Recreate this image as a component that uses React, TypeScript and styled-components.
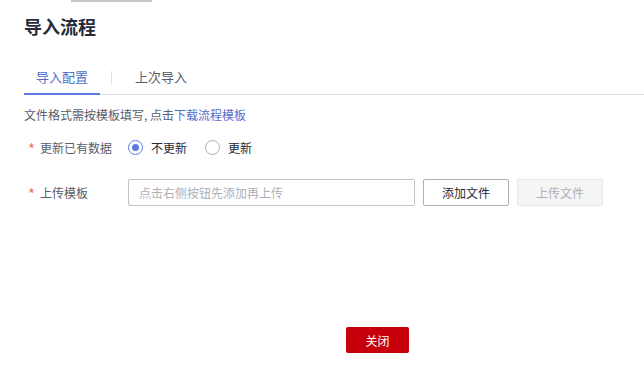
import React from "react";
import styled, { createGlobalStyle } from "styled-components";

const Global = createGlobalStyle`
  html, body { margin: 0; padding: 0; background: #fff; overflow: hidden; }
  body { font-family: "Noto Sans CJK SC", "Noto Sans", sans-serif; color: #575d6c; }
  * { box-sizing: border-box; }
`;

const Viewport = styled.div`
  width: 100vw;
  overflow: hidden;
`;

const Page = styled.div`
  width: 755px;
  padding: 0 24px;
  display: flex;
  flex-direction: column;
`;

const TopStrip = styled.div`
  width: 81px;
  height: 2px;
  margin-left: 47px;
  background: #c8c8c8;
`;

const Title = styled.h1`
  margin: 12px 0 0;
  font-size: 18px;
  line-height: 24px;
  font-weight: 700;
  color: #252b3a;
`;

const TabBar = styled.div`
  margin-top: 29px;
  display: flex;
  align-items: center;
  border-bottom: 1px solid #dfe1e6;
`;

const Tab = styled.div<{ $active?: boolean }>`
  padding: 0 12px 6px;
  font-size: 13px;
  line-height: 20px;
  color: ${(p) => (p.$active ? "#526ecc" : "#575d6c")};
  border-bottom: 2px solid ${(p) => (p.$active ? "#5e7ce0" : "transparent")};
  margin-bottom: -1px;
`;

const TabDivider = styled.div`
  width: 1px;
  height: 14px;
  margin: 0 11px 6px;
  background: #dfe1e6;
`;

const Hint = styled.p`
  margin: 11px 0 0;
  font-size: 12px;
  line-height: 18px;
  color: #575d6c;
`;

const Link = styled.a`
  color: #526ecc;
  text-decoration: none;
`;

const FormRow = styled.div<{ $gap: number }>`
  margin-top: ${(p) => p.$gap}px;
  display: flex;
  align-items: center;
  min-height: 28px;
`;

const Label = styled.div`
  width: 104px;
  padding-left: 4px;
  display: flex;
  align-items: center;
  gap: 4px;
  font-size: 12px;
  color: #575d6c;
`;

const Star = styled.span`
  color: #f66f6a;
  font-size: 15px;
  line-height: 12px;
  width: 8px;
  padding-top: 3px;
`;

const RadioGroup = styled.div`
  display: flex;
  align-items: center;
  gap: 18px;
`;

const RadioItem = styled.label`
  display: flex;
  align-items: center;
  gap: 8px;
  font-size: 12px;
  color: #252b3a;
`;

const RadioCircle = styled.span<{ $checked?: boolean }>`
  width: 15px;
  height: 15px;
  border-radius: 50%;
  border: 1px solid ${(p) => (p.$checked ? "#5e7ce0" : "#adb0b8")};
  display: flex;
  align-items: center;
  justify-content: center;
  &::after {
    content: "";
    width: 7px;
    height: 7px;
    border-radius: 50%;
    background: ${(p) => (p.$checked ? "#5e7ce0" : "transparent")};
  }
`;

const Input = styled.input`
  width: 287px;
  height: 27px;
  border: 1px solid #c2c4ca;
  border-radius: 2px;
  padding: 0 10px;
  font-family: inherit;
  font-size: 12px;
  color: #252b3a;
  outline: none;
  &::placeholder { color: #adb0b8; }
`;

const Button = styled.button<{ $disabled?: boolean }>`
  width: 86px;
  height: 27px;
  margin-left: 8px;
  border-radius: 2px;
  font-family: inherit;
  font-size: 12px;
  border: 1px solid ${(p) => (p.$disabled ? "#e6e7ea" : "#adb0b8")};
  background: ${(p) => (p.$disabled ? "#f5f5f6" : "#fff")};
  color: ${(p) => (p.$disabled ? "#adb0b8" : "#252b3a")};
`;

const Footer = styled.div`
  margin-top: 121px;
  display: flex;
  justify-content: center;
`;

const CloseButton = styled.button`
  width: 63px;
  height: 26px;
  border: none;
  border-radius: 2px;
  background: #c7000b;
  color: #fff;
  font-family: inherit;
  font-size: 12px;
`;

export default function App() {
  return (
    <>
      <Global />
      <Viewport>
        <Page>
          <TopStrip />
          <Title>导入流程</Title>
          <TabBar>
            <Tab $active>导入配置</Tab>
            <TabDivider />
            <Tab>上次导入</Tab>
          </TabBar>
          <Hint>
            文件格式需按模板填写, 点击<Link href="#">下载流程模板</Link>
          </Hint>
          <FormRow $gap={9}>
            <Label>
              <Star>*</Star>更新已有数据
            </Label>
            <RadioGroup>
              <RadioItem>
                <RadioCircle $checked />
                不更新
              </RadioItem>
              <RadioItem>
                <RadioCircle />
                更新
              </RadioItem>
            </RadioGroup>
          </FormRow>
          <FormRow $gap={17}>
            <Label>
              <Star>*</Star>上传模板
            </Label>
            <Input placeholder="点击右侧按钮先添加再上传" readOnly />
            <Button>添加文件</Button>
            <Button $disabled disabled>
              上传文件
            </Button>
          </FormRow>
          <Footer>
            <CloseButton>关闭</CloseButton>
          </Footer>
        </Page>
      </Viewport>
    </>
  );
}
